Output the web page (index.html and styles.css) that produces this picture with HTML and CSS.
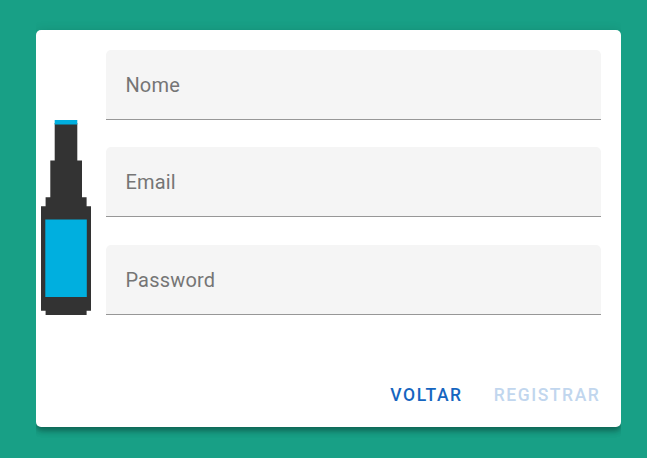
FILE: index.html
```html
<!DOCTYPE html>
<html lang="pt">
<head>
<meta charset="utf-8">
<title>Registrar</title>
<link rel="stylesheet" href="styles.css">
</head>
<body>
<form class="card">
  <div class="card-body">
    <svg class="logo" width="50" height="195" viewBox="0 0 50 195" aria-hidden="true">
      <path fill="#333" d="M13.7 3H36.3V40.5H41V77.3H45.6V86.3H50V190.7H45.6V195H4.6V190.7H0V86.3H4.6V77.3H9.3V40.5H13.7Z"/>
      <path fill="#00afdf" d="M13.7 0H36.3V4.6H13.7ZM4.3 99.4H45.8V177H4.3Z"/>
    </svg>
    <div class="fields">
      <label class="field">Nome</label>
      <label class="field">Email</label>
      <label class="field">Password</label>
    </div>
  </div>
  <div class="actions">
    <button class="btn" type="button">VOLTAR</button>
    <button class="btn" type="submit" disabled>REGISTRAR</button>
  </div>
</form>
</body>
</html>
```
FILE: styles.css
```css
* { box-sizing: border-box; }
body {
  margin: 0;
  height: 458px;
  padding: 30px 26px 31px 36px;
  background: #18a086;
  font-family: Roboto, sans-serif;
  overflow: hidden;
}
.card {
  height: 397px;
  padding: 20px 20px 0 5px;
  background: #fff;
  border-radius: 5px;
  box-shadow: 0 4px 5px -1px rgba(0,0,0,.2), 0 5px 6px rgba(0,0,0,.14), 0 1px 12px rgba(0,0,0,.12);
  clip-path: inset(-30px 0);
}
.card-body {
  display: flex;
  align-items: flex-end;
  gap: 15px;
  height: 265px;
}
.logo { display: block; flex: none; }
.fields {
  flex: 1;
  height: 100%;
  display: flex;
  flex-direction: column;
}
.field {
  display: flex;
  align-items: center;
  height: 70px;
  padding: 1px 19.4px 0;
  background: #f5f5f5;
  border-bottom: 1px solid #979797;
  border-radius: 5px 5px 0 0;
  color: #757575;
  font-size: 20px;
  letter-spacing: .19px;
}
.field + .field { margin-top: 27.4px; }
.actions {
  display: flex;
  justify-content: flex-end;
  gap: 31px;
  margin-top: 57px;
  padding-right: .6px;
}
.btn {
  height: 45px;
  padding: 0;
  border: 0;
  background: none;
  color: #1565c0;
  font: 500 17.5px Roboto, sans-serif;
  letter-spacing: 1.56px;
}
.btn:disabled { color: #c1d6ee; }
```
